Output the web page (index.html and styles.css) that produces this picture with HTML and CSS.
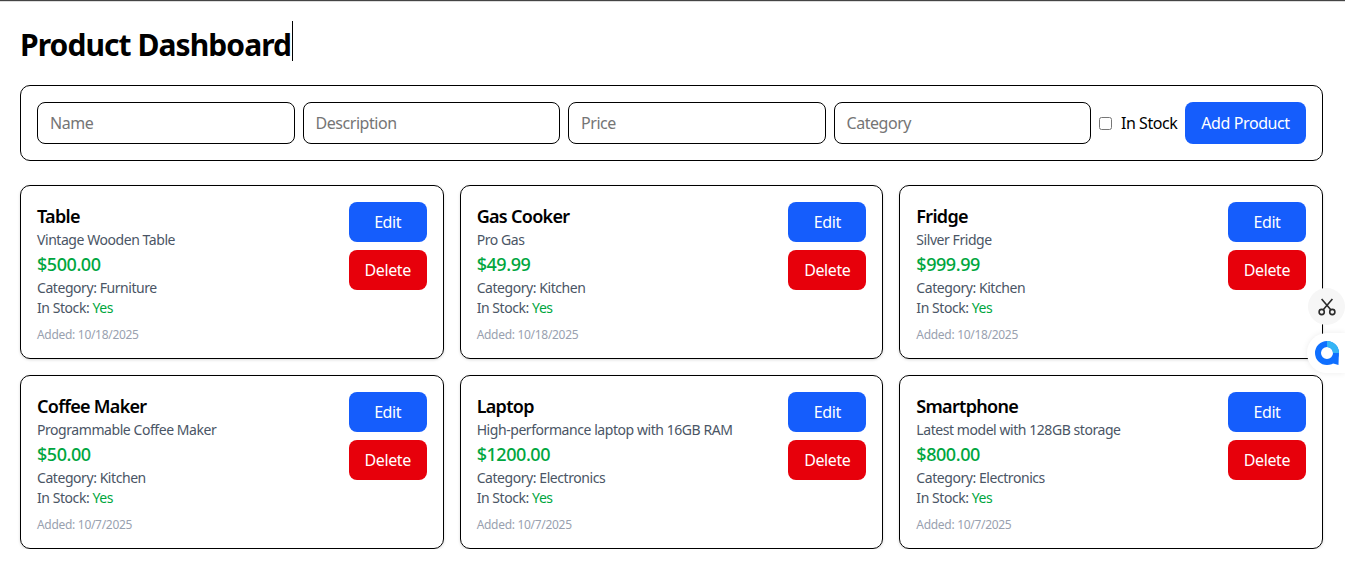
FILE: index.html
```html
<!DOCTYPE html>
<html>
<head>
	<title>Product Dashboard</title>
	<link rel="stylesheet" href="styles.css">
</head>
<body>
	<div class="page">
		<h1 class="title"><span class="titleText">Product Dashboard<i class="caret"></i></span></h1>

		<form class="addForm">
			<input class="field" type="text" placeholder="Name">
			<input class="field" type="text" placeholder="Description">
			<input class="field" type="text" placeholder="Price">
			<input class="field" type="text" placeholder="Category">
			<label class="stockCheck"><input type="checkbox"> In Stock</label>
			<button class="btn btnBlue addBtn" type="button">Add Product</button>
		</form>

		<div class="grid">
			<div class="card">
				<div class="info">
					<h3 class="name">Table</h3>
					<p class="line">Vintage Wooden Table</p>
					<p class="price">$500.00</p>
					<p class="line">Category: Furniture</p>
					<p class="line">In Stock: <span class="yes">Yes</span></p>
					<p class="added">Added: 10/18/2025</p>
				</div>
				<div class="actions">
					<button class="btn btnBlue" type="button">Edit</button>
					<button class="btn btnRed" type="button">Delete</button>
				</div>
			</div>
			<div class="card">
				<div class="info">
					<h3 class="name">Gas Cooker</h3>
					<p class="line">Pro Gas</p>
					<p class="price">$49.99</p>
					<p class="line">Category: Kitchen</p>
					<p class="line">In Stock: <span class="yes">Yes</span></p>
					<p class="added">Added: 10/18/2025</p>
				</div>
				<div class="actions">
					<button class="btn btnBlue" type="button">Edit</button>
					<button class="btn btnRed" type="button">Delete</button>
				</div>
			</div>
			<div class="card">
				<div class="info">
					<h3 class="name">Fridge</h3>
					<p class="line">Silver Fridge</p>
					<p class="price">$999.99</p>
					<p class="line">Category: Kitchen</p>
					<p class="line">In Stock: <span class="yes">Yes</span></p>
					<p class="added">Added: 10/18/2025</p>
				</div>
				<div class="actions">
					<button class="btn btnBlue" type="button">Edit</button>
					<button class="btn btnRed" type="button">Delete</button>
				</div>
			</div>
			<div class="card">
				<div class="info">
					<h3 class="name">Coffee Maker</h3>
					<p class="line">Programmable Coffee Maker</p>
					<p class="price">$50.00</p>
					<p class="line">Category: Kitchen</p>
					<p class="line">In Stock: <span class="yes">Yes</span></p>
					<p class="added">Added: 10/7/2025</p>
				</div>
				<div class="actions">
					<button class="btn btnBlue" type="button">Edit</button>
					<button class="btn btnRed" type="button">Delete</button>
				</div>
			</div>
			<div class="card">
				<div class="info">
					<h3 class="name">Laptop</h3>
					<p class="line">High-performance laptop with 16GB RAM</p>
					<p class="price">$1200.00</p>
					<p class="line">Category: Electronics</p>
					<p class="line">In Stock: <span class="yes">Yes</span></p>
					<p class="added">Added: 10/7/2025</p>
				</div>
				<div class="actions">
					<button class="btn btnBlue" type="button">Edit</button>
					<button class="btn btnRed" type="button">Delete</button>
				</div>
			</div>
			<div class="card">
				<div class="info">
					<h3 class="name">Smartphone</h3>
					<p class="line">Latest model with 128GB storage</p>
					<p class="price">$800.00</p>
					<p class="line">Category: Electronics</p>
					<p class="line">In Stock: <span class="yes">Yes</span></p>
					<p class="added">Added: 10/7/2025</p>
				</div>
				<div class="actions">
					<button class="btn btnBlue" type="button">Edit</button>
					<button class="btn btnRed" type="button">Delete</button>
				</div>
			</div>
		</div>
	</div>

	<!-- floating browser extension buttons -->
	<div class="floatBtn floatCut">
		<svg width="18" height="18" viewBox="0 0 18 18" fill="none" stroke="#2b2b2b" stroke-width="1.6">
			<circle cx="3.7" cy="14" r="2.6"/>
			<circle cx="14.3" cy="14" r="2.6"/>
			<path d="M5.2 11.8 14.4 1M12.8 11.8 3.6 1"/>
		</svg>
	</div>
	<div class="floatBtn floatChat">
		<svg width="24" height="24" viewBox="0 0 24 24" fill="none">
			<circle cx="12" cy="12" r="9" stroke="#0f6fff" stroke-width="6"/>
			<path d="M12 3A9 9 0 0 1 21 12" stroke="#35b5f5" stroke-width="6"/>
			<path d="M23.8 13 L23.5 24 L13 21 Z" fill="#0f6fff"/>
		</svg>
	</div>
</body>
</html>
```

FILE: styles.css
```css
* {
	box-sizing: border-box;
}
html, body {
	margin: 0px;
	padding: 0px;
}
body {
	background-color: white;
	color: black;
	font-family: "Noto Sans", sans-serif;
	border-top: 1px solid #444;
	box-shadow: inset 0px 1px 0px #ddd;
	overflow: hidden;
}
.page {
	padding: 24px 22px 0px 20px;
}
.title {
	margin: 0px 0px 20px 0px;
	font-size: 30px;
	line-height: 40px;
	font-weight: 700;
	letter-spacing: -0.93px;
}
.titleText {
	position: relative;
}
.caret {
	position: absolute;
	right: -2px;
	top: -3px;
	width: 1px;
	height: 40px;
	background-color: black;
}
.addForm {
	display: flex;
	align-items: center;
	gap: 8px;
	padding: 16px;
	margin-bottom: 24px;
	border: 1px solid black;
	border-radius: 10px;
}
.field {
	flex: 1;
	min-width: 0px;
	height: 42px;
	padding: 0px 12px;
	border: 1px solid black;
	border-radius: 8px;
	font-family: inherit;
	font-size: 16px;
	letter-spacing: -0.45px;
}
.field::placeholder {
	color: #757575;
}
.stockCheck {
	display: flex;
	flex: none;
	width: 78px;
	align-items: center;
	gap: 9px;
	font-size: 16px;
	letter-spacing: -0.45px;
	white-space: nowrap;
}
.stockCheck input {
	width: 13px;
	height: 13px;
	margin: 0px;
}
.btn {
	height: 40px;
	padding: 0px 16px;
	border: none;
	border-radius: 8px;
	color: white;
	font-family: inherit;
	font-size: 16px;
	letter-spacing: -0.4px;
}
.btnBlue {
	background-color: #155dfc;
}
.btnRed {
	background-color: #e7000b;
}
.addBtn {
	height: 42px;
	flex: none;
	width: 121px;
	padding: 0px;
}
.grid {
	display: grid;
	grid-template-columns: repeat(3, 1fr);
	gap: 16px;
}
.card {
	display: flex;
	justify-content: space-between;
	align-items: flex-start;
	padding: 16px;
	border: 1px solid black;
	border-radius: 10px;
	box-shadow: 0px 1px 3px rgba(0, 0, 0, 0.15);
}
.name {
	margin: 0px;
	font-size: 18px;
	line-height: 28px;
	font-weight: 600;
	letter-spacing: -0.7px;
}
.line {
	margin: 0px;
	font-size: 14px;
	line-height: 20px;
	color: #4a5565;
	letter-spacing: -0.44px;
}
.price {
	margin: 0px;
	font-size: 18px;
	line-height: 28px;
	font-weight: 500;
	color: #00a63e;
	letter-spacing: -0.45px;
}
.yes {
	color: #00a63e;
}
.added {
	margin: 9px 0px -1px 0px;
	font-size: 12px;
	line-height: 16px;
	color: #99a1af;
	letter-spacing: -0.3px;
}
.actions {
	display: flex;
	flex-direction: column;
	gap: 8px;
	width: 78px;
}
.actions .btn {
	padding: 0px;
}
.floatBtn {
	position: fixed;
	display: flex;
	align-items: center;
	background-color: white;
}
.floatCut {
	left: 1308px;
	top: 288px;
	width: 37px;
	height: 37px;
	border-radius: 50%;
	justify-content: center;
	background-color: #f6f6f6;
}
.floatChat {
	left: 1307px;
	top: 333px;
	width: 38px;
	height: 40px;
	border-radius: 20px 0px 0px 20px;
	box-shadow: 0px 0px 6px rgba(0, 0, 0, 0.08);
	padding-left: 8px;
}
```
